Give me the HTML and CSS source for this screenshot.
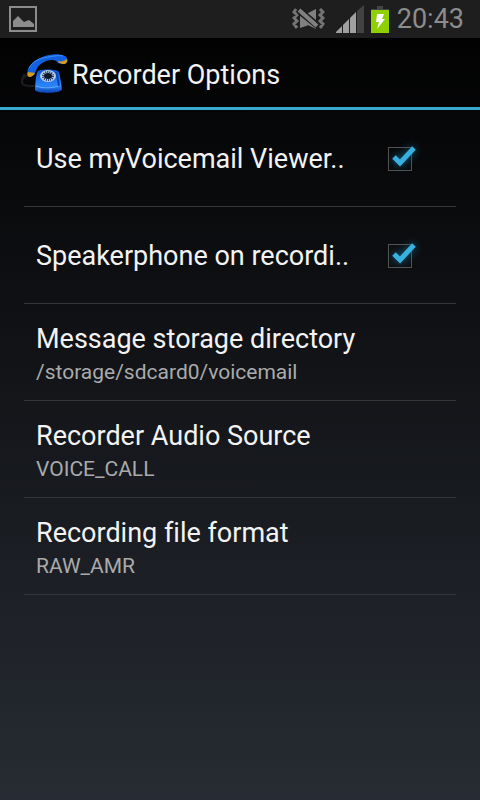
FILE: index.html
```html
<!DOCTYPE html>
<html lang="en">
<head>
<meta charset="utf-8">
<meta name="viewport" content="width=device-width, initial-scale=1">
<title>Recorder Options</title>
<link rel="stylesheet" href="styles.css">
</head>
<body>
<div class="status">
  <svg class="picture" width="28" height="26" viewBox="0 0 28 26" aria-hidden="true">
    <rect x="1" y="1" width="26" height="24" fill="none" stroke="#8c8c8c" stroke-width="2"/>
    <path d="M4 21v-6l5-5 6 6 5-2 5 4v3z" fill="#8c8c8c"/>
  </svg>
  <div class="indicators">
    <svg width="33" height="22" viewBox="0 0 33 22" aria-hidden="true">
      <path d="M4 1L2 4l3 3-3 3 3 3-3 3 3 4M28 1l3 3-3 3 3 3-3 3 3 3-3 4" fill="none" stroke="#747474" stroke-width="3"/>
      <path d="M8 6h6l10-5v20l-10-5H8z" fill="#808080"/>
      <path d="M8 0l18 15M6 5l20 16" stroke="#1e1e1e" stroke-width="2"/>
      <path d="M7 2l18 16" stroke="#808080" stroke-width="4"/>
      <path d="M8 20v-9l9 6z" fill="#808080"/>
    </svg>
    <svg class="signal" width="28" height="28" viewBox="0 0 28 28" aria-hidden="true">
      <path d="M0 28v-1L6 21v7z" fill="#a0a0a0"/>
      <path d="M7 28v-8l6-6v14z" fill="#a0a0a0"/>
      <path d="M14 28V13l6-6v21z" fill="#a0a0a0"/>
      <path d="M21 28V6l7-6v28z" fill="#424242"/>
    </svg>
    <svg class="battery" width="18" height="28" viewBox="0 0 18 28" aria-hidden="true">
      <path d="M6 1h6v3h6v1H0V4h6z" fill="#444"/>
      <path d="M0 5h18v23H0z" fill="#8fd000"/>
      <path d="M6 9h7l-2 5h3L6 24l2-7H5z" fill="#fff"/>
    </svg>
    <time class="clock">20:43</time>
  </div>
</div>
<header class="bar">
  <svg class="phone" width="48" height="42" viewBox="0 0 48 42" aria-hidden="true">
    <defs>
      <linearGradient id="base" x1="0" y1="0" x2="0" y2="1">
        <stop offset="0" stop-color="#0b55d8"/><stop offset=".7" stop-color="#2a86f8"/><stop offset="1" stop-color="#0a3fb0"/>
      </linearGradient>
    </defs>
    <path d="M8 21c-4 2-7 5-6 8 1 3 6 3 13 3M5 20c-3 3-4 7-2 9" fill="none" stroke="#1c1c20" stroke-width="2"/>
    <path d="M8 15C12 7 20 3 29 1c5-1 12-1 16 1 2 1 3 4 2 6-2 2-6 2-9 1-1-2-3-3-6-3-7 0-14 4-16 11-1 3-3 5-6 6-3-1-3-5-2-8z" fill="#1261e0"/>
    <path d="M9 14C13 7 20 4 28 3c6-1 11-2 15-1" fill="none" stroke="#3d90f2" stroke-width="1"/>
    <path d="M8 18l7 1c-1 2-3 4-6 4-2-1-2-3-1-5zM38 7c3 1 6 0 9-2 1 3-1 5-3 5-2 0-5 0-6-3z" fill="#d79a1e"/>
    <path d="M18 17c4-2 16-2 20 0 2 2 3 12 4 18-1 5-25 5-27 1 0-5 1-17 3-19z" fill="url(#base)"/>
    <path d="M16 32c7 3 19 2 25-1" fill="none" stroke="#61adff" stroke-width="1"/>
    <path d="M36 18c2 5 2 9 3 14" fill="none" stroke="#0c43b4" stroke-width="2"/>
    <ellipse cx="28" cy="22" rx="8" ry="6" fill="#b7cfe0"/>
    <ellipse cx="28" cy="22" rx="5" ry="4" fill="none" stroke="#17306c" stroke-width="2" stroke-dasharray="1 1"/>
    <ellipse cx="28" cy="22" rx="4" ry="3" fill="#101628"/>
  </svg>
  <h1 class="title">Recorder Options</h1>
</header>
<main class="list">
  <label class="row check">
    <span class="name">Use myVoicemail Viewer..</span>
    <span class="tick">
      <input type="checkbox" checked>
      <svg class="mark" width="25" height="22" viewBox="0 0 25 22" aria-hidden="true"><path d="M2 11l6 6L22 2" fill="none" stroke="#38b0e0" stroke-width="5"/></svg>
    </span>
  </label>
  <label class="row check">
    <span class="name">Speakerphone on recordi..</span>
    <span class="tick">
      <input type="checkbox" checked>
      <svg class="mark" width="25" height="22" viewBox="0 0 25 22" aria-hidden="true"><path d="M2 11l6 6L22 2" fill="none" stroke="#38b0e0" stroke-width="5"/></svg>
    </span>
  </label>
  <button type="button" class="row"><span class="name">Message storage directory</span><span class="value">/storage/sdcard0/voicemail</span></button>
  <button type="button" class="row"><span class="name">Recorder Audio Source</span><span class="value">VOICE_CALL</span></button>
  <button type="button" class="row"><span class="name">Recording file format</span><span class="value">RAW_AMR</span></button>
</main>
</body>
</html>
```
FILE: styles.css
```css
* { box-sizing: border-box; }

body {
  margin: 0;
  min-height: 100vh;
  background: linear-gradient(#000, #272b33);
  color: #f3f3f3;
  font-family: Roboto, "Liberation Sans", sans-serif;
  font-variant-ligatures: none;
}

.status {
  display: flex;
  align-items: center;
  justify-content: space-between;
  height: 39px;
  padding: 0 16px 0 9px;
  border-bottom: 1px solid #000;
  background: #1e1e1e;
}

.indicators { display: flex; align-items: center; }
.signal { margin-left: 11px; }
.battery { margin: 0 8px 0 7px; }

.clock {
  color: #8c8c8c;
  font-size: 27px;
  line-height: 38px;
}

.bar {
  display: flex;
  align-items: center;
  gap: 4px;
  height: 71px;
  padding: 4px 0 0 20px;
  border-bottom: 3px solid #3aa9d2;
}

.title {
  margin: 0;
  font-size: 27px;
  font-weight: 400;
  line-height: 32px;
}

.list { padding: 0 24px; }

.row {
  display: flex;
  flex-direction: column;
  justify-content: center;
  width: 100%;
  height: 97px;
  padding: 6px 12px 0;
  border: 0;
  border-bottom: 1px solid #34373a;
  background: none;
  color: inherit;
  font: inherit;
  text-align: left;
}

.check {
  flex-direction: row;
  align-items: center;
  justify-content: space-between;
  padding: 1px 44px 0 12px;
}

.name {
  font-size: 27px;
  line-height: 34px;
  white-space: nowrap;
}

.value {
  color: #a9aaab;
  font-size: 21px;
  line-height: 32px;
}

.tick { position: relative; display: flex; }

.tick input {
  appearance: none;
  width: 24px;
  height: 24px;
  margin: 0;
  border: 1px solid #55524f;
}

.mark {
  position: absolute;
  left: 4px;
  top: -1px;
  overflow: visible;
  pointer-events: none;
  filter: drop-shadow(0 0 4px #126c90);
}

.tick input:not(:checked) + .mark { display: none; }
```
